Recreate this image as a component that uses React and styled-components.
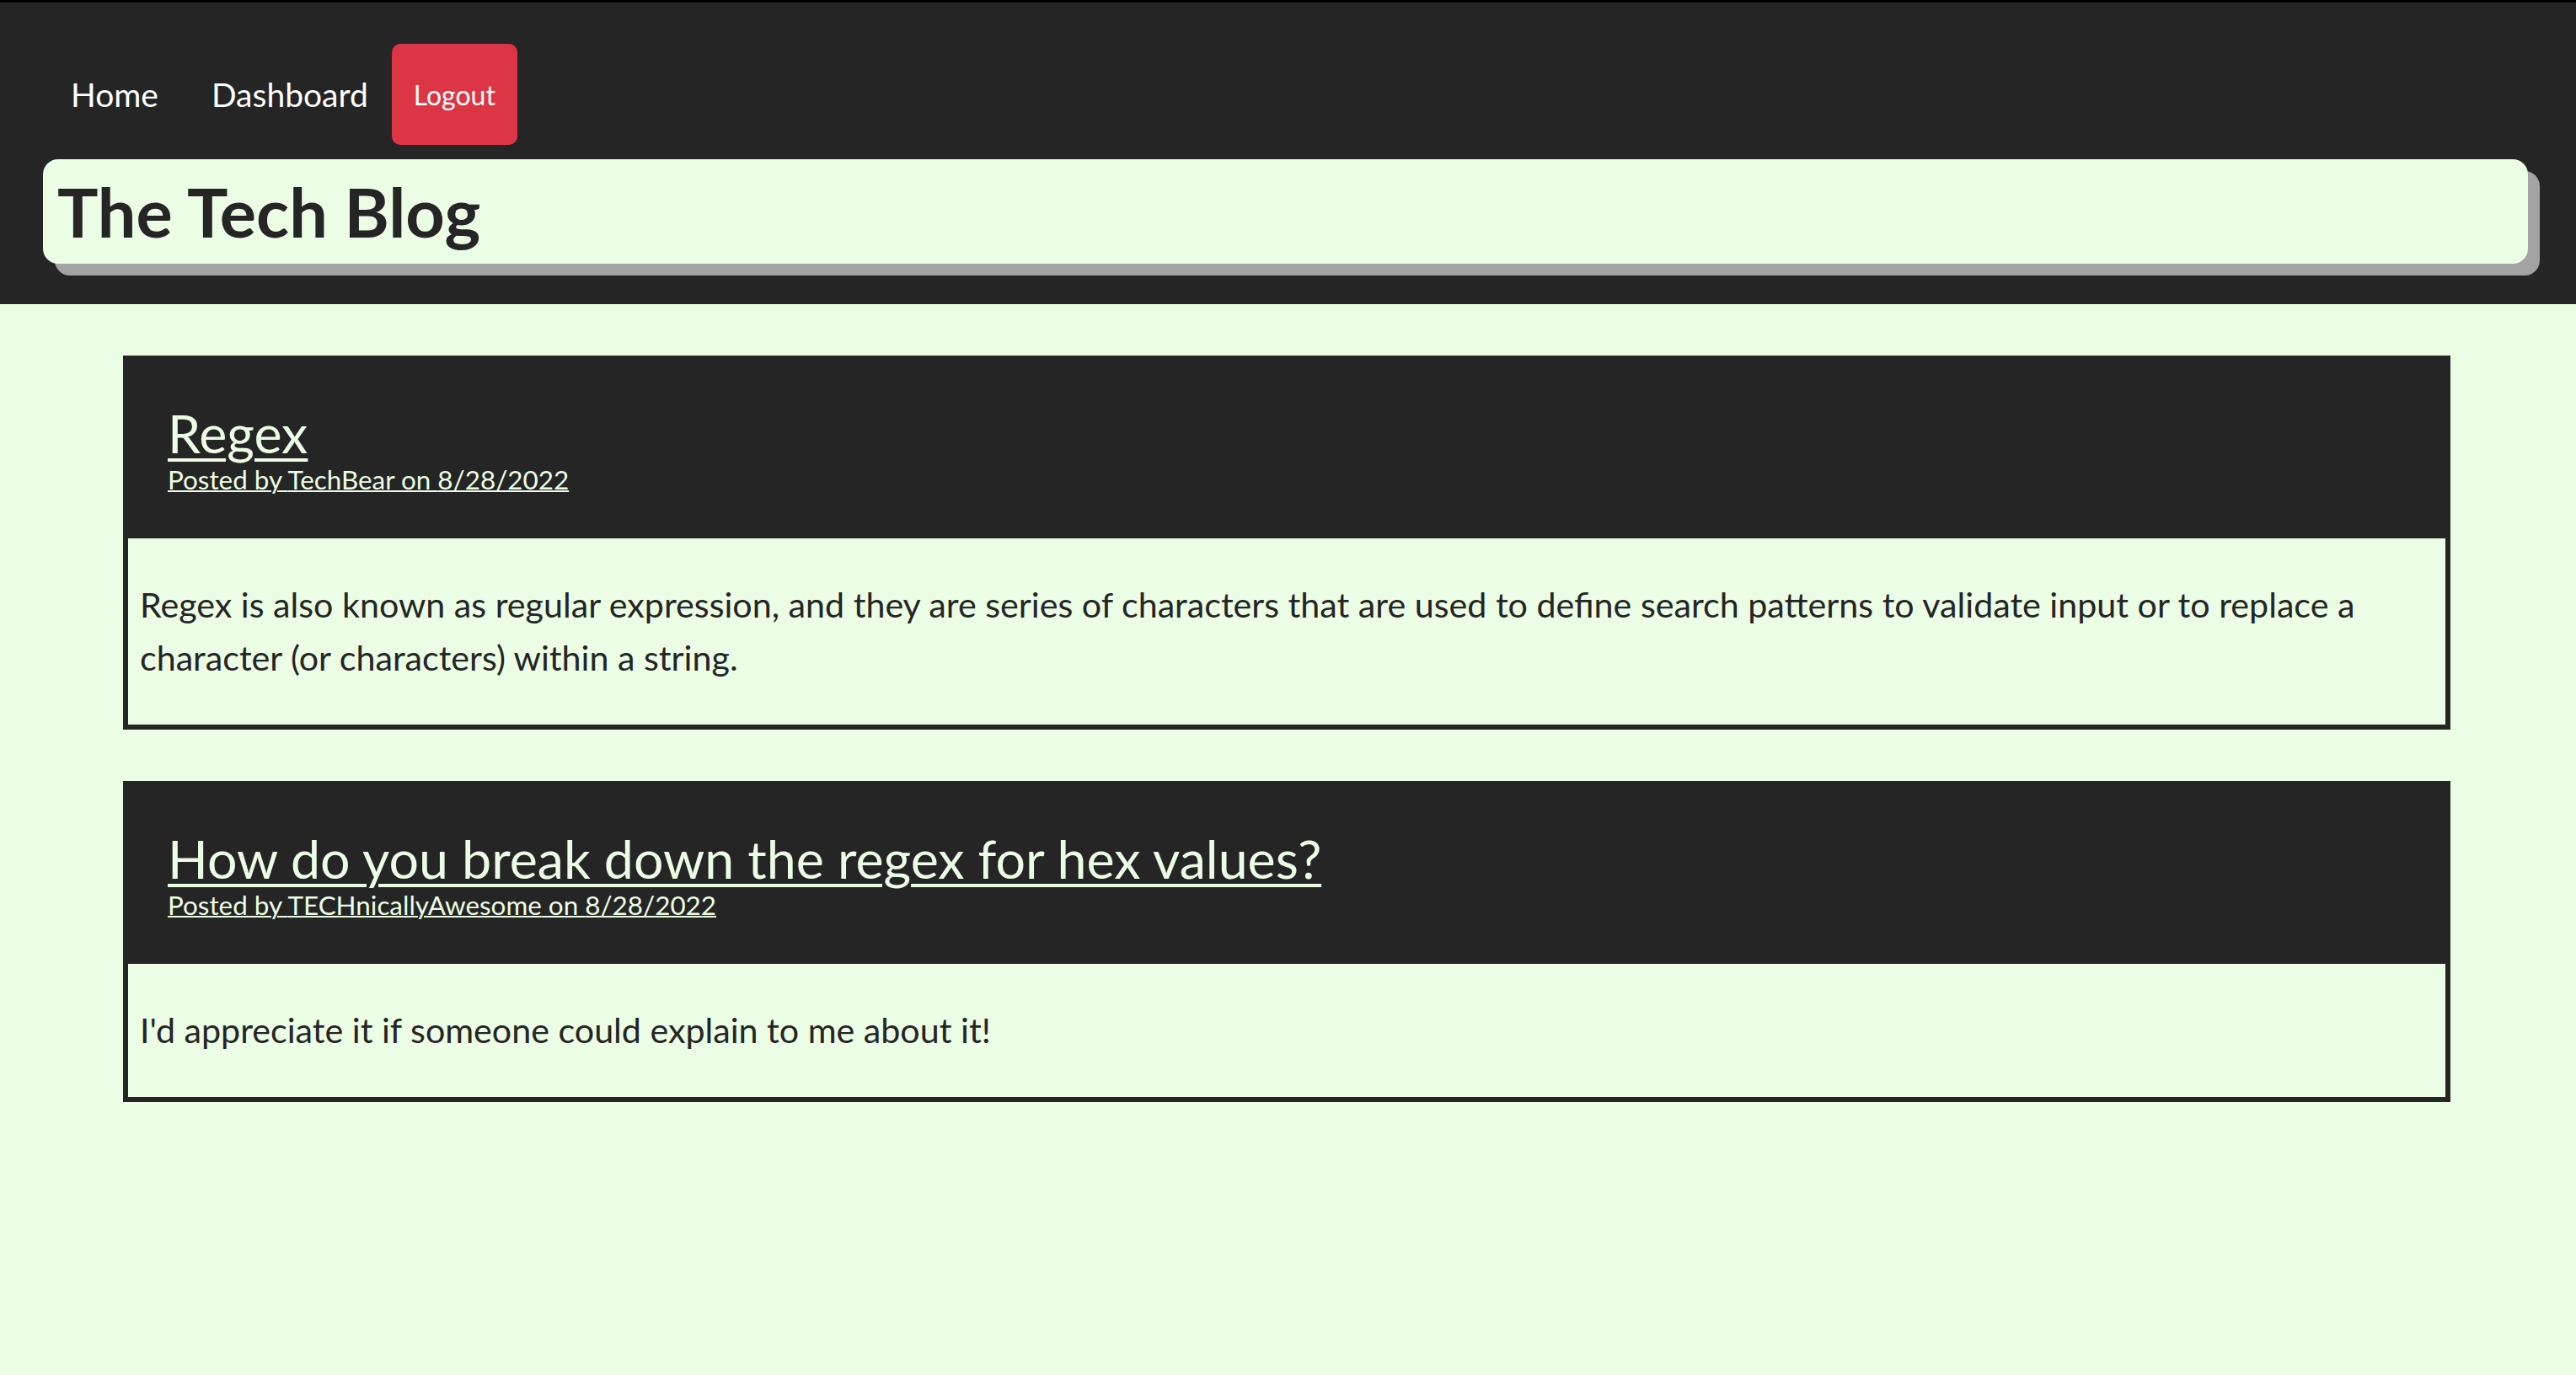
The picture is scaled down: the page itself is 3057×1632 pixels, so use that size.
import styled, { createGlobalStyle } from 'styled-components'

const GlobalStyle = createGlobalStyle`
body {
  margin: 0;
  background-color: #ebfde4;
  font-family: Lato, "Open Sans", sans-serif;
  color: #252525;
}
`

const Header = styled.header`
background-color: #252525;
border-top: 3px solid #000;
padding: 49px 57px 48px 51px;
display: flex;
flex-direction: column;
gap: 17px;
`

const Nav = styled.nav`
display: flex;
align-items: center;
height: 120px;
`

const NavLink = styled.a`
color: #fff;
font-size: 39px;
text-decoration: none;
padding: 0 30px 0 33px;
`

const LogoutButton = styled.button`
height: 120px;
padding: 0 26px;
margin-left: -2px;
background-color: #dc3545;
color: #fff;
border: none;
border-radius: 10px;
font-family: Lato, sans-serif;
font-size: 32px;
cursor: pointer;
`

const TitleBox = styled.div`
height: 124px;
display: flex;
align-items: center;
padding: 0 17px;
background-color: #ebfde4;
border-radius: 18px;
box-shadow: 14px 14px 0 #a3a3a3;
`

const Title = styled.h1`
margin: 0;
font-size: 81px;
font-weight: 700;
line-height: 1.2;
color: #252525;
`

const Main = styled.main`
padding: 61px 149px 61px 146px;
display: flex;
flex-direction: column;
gap: 61px;
`

const Card = styled.article`
border: 6px solid #252525;
background-color: #ebfde4;
`

const CardHeader = styled.div`
background-color: #252525;
margin: -6px -6px 0;
padding: 54px 53px 50px;
`

const PostTitle = styled.a`
display: block;
width: fit-content;
font-size: 62.7px;
line-height: 1.2;
color: #ebfde4;
text-decoration: underline;
text-decoration-thickness: 4px;
text-underline-offset: 6px;
`

const PostMeta = styled.a`
display: block;
width: fit-content;
font-size: 31.4px;
line-height: 1.2;
color: #ebfde4;
text-decoration: underline;
text-decoration-thickness: 2px;
`

const CardBody = styled.p`
margin: 0;
padding: 47px 14px 48px;
font-size: 41.2px;
line-height: 63px;
color: #252525;
`

const posts = [
  {
    title: 'Regex',
    author: 'TechBear',
    date: '8/28/2022',
    body: 'Regex is also known as regular expression, and they are series of characters that are used to define search patterns to validate input or to replace a character (or characters) within a string.',
  },
  {
    title: 'How do you break down the regex for hex values?',
    author: 'TECHnicallyAwesome',
    date: '8/28/2022',
    body: "I'd appreciate it if someone could explain to me about it!",
  },
]

const App = () => {
    return (
        <>
            <GlobalStyle />
            <Header>
                <Nav>
                    <NavLink href="#">Home</NavLink>
                    <NavLink href="#">Dashboard</NavLink>
                    <LogoutButton>Logout</LogoutButton>
                </Nav>
                <TitleBox>
                    <Title>The Tech Blog</Title>
                </TitleBox>
            </Header>
            <Main>
                {posts.map((post) => (
                    <Card key={post.title}>
                        <CardHeader>
                            <PostTitle href="#">{post.title}</PostTitle>
                            <PostMeta href="#">Posted by {post.author} on {post.date}</PostMeta>
                        </CardHeader>
                        <CardBody>{post.body}</CardBody>
                    </Card>
                ))}
            </Main>
        </>
    )
}

export default App
